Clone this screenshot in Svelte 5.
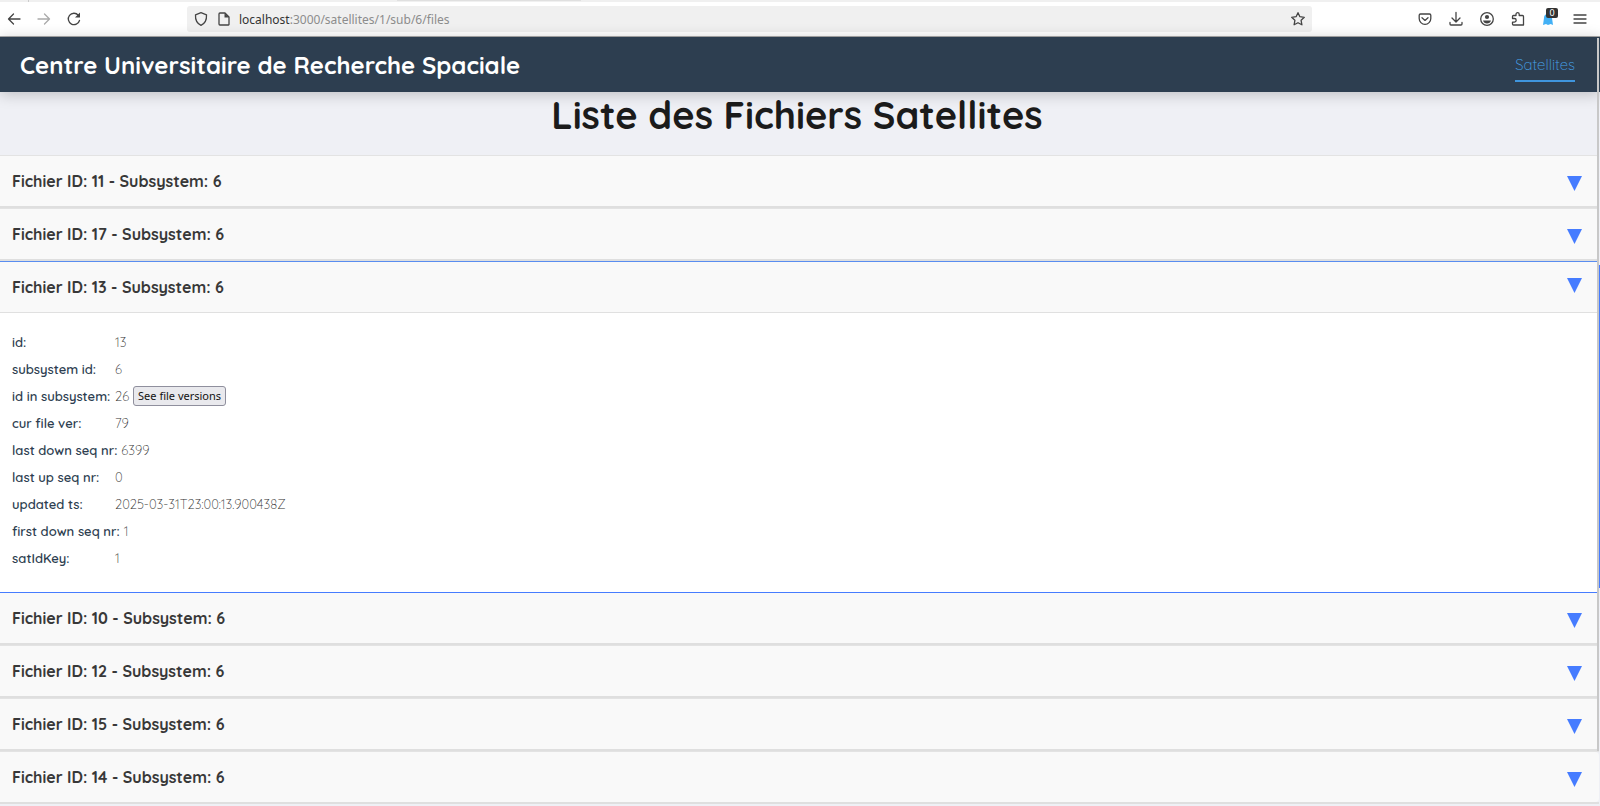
<script>
  let openId = $state(13);
  const files = [11, 17, 13, 10, 12, 15, 14];
  const details = [
    ['id', '13'],
    ['subsystem id', '6'],
    ['id in subsystem', '26'],
    ['cur file ver', '79'],
    ['last down seq nr', '6399'],
    ['last up seq nr', '0'],
    ['updated ts', '2025-03-31T23:00:13.900438Z'],
    ['first down seq nr', '1'],
    ['satIdKey', '1']
  ];
</script>

<div class="tabstrip"><span></span><i></i></div>
<div class="toolbar">
  <div class="nav">
    <button aria-label="Back"><svg viewBox="0 0 16 16"><path d="M14 8H2.5M7.5 3L2.5 8l5 5" /></svg></button>
    <button aria-label="Forward" class="dim"><svg viewBox="0 0 16 16"><path d="M2 8h11.500M8.500 3l5 5-5 5" /></svg></button>
    <button aria-label="Reload"><svg viewBox="0 0 16 16"><path d="M13.500 9.500A5.700 5.700 0 1 1 12.300 4.200" /><path class="fill" d="M14 1.500v5H9z" /></svg></button>
  </div>
  <div class="address">
    <svg viewBox="0 0 16 16"><path d="M8 1.700L13.500 3.800C13.800 8.500 12 12.500 8 14.400C4 12.500 2.200 8.500 2.500 3.800Z" /></svg>
    <svg viewBox="0 0 16 16"><path d="M4 2h5l4 4v7.500a.5.500 0 0 1-.5.500h-8.500a1 1 0 0 1-1-1V3a1 1 0 0 1 1-1z" /><path class="fill" d="M8.500 2v4.500H13z" /></svg>
    <span class="url"><b>localhost</b>:3000/satellites/1/sub/6/files</span>
    <button aria-label="Bookmark"><svg viewBox="0 0 16 16"><path d="M8 1.700l1.900 4 4.400.6-3.200 3 .8 4.500L8 11.700l-3.900 2.100.8-4.500-3.200-3 4.400-.6z" /></svg></button>
  </div>
  <div class="tools">
    <button aria-label="Pocket"><svg viewBox="0 0 16 16"><path d="M3.500 3h9A1.300 1.300 0 0 1 13.800 4.300V7.500a5.800 5.800 0 0 1-11.600 0V4.300A1.300 1.300 0 0 1 3.500 3zM5 6.700l3 2.700 3-2.700" /></svg></button>
    <button aria-label="Downloads"><svg viewBox="0 0 16 16"><path d="M8 1.500v9M4 7l4 4 4-4M2 11.500v1.500a1 1 0 0 0 1 1h10a1 1 0 0 0 1-1v-1.500" /></svg></button>
    <button aria-label="Account"><svg viewBox="0 0 16 16"><circle cx="8" cy="8" r="6.300" /><circle class="fill" cx="8" cy="6" r="2.100" /><path class="fill" d="M4 9.500h8c-.5 2-2 3-4 3s-3.500-1-4-3z" /></svg></button>
    <button aria-label="Extensions"><svg viewBox="0 0 16 16"><path d="M2.500 7.500V5.500a1 1 0 0 1 1-1H6V3.300a1.600 1.600 0 0 1 3.200 0V4.500h3.300a1 1 0 0 1 1 1V14h-10a1 1 0 0 1-1-1v-1.900h1.900a1.800 1.800 0 0 0 0-3.600z" /></svg></button>
    <button aria-label="Blocker" class="ghost"><svg viewBox="0 0 16 16"><path d="M2 14L3 7a4 4 0 0 1 8 0l1 7-2.300-1L7 14l-2-1z" /></svg><em>0</em></button>
    <button aria-label="Menu"><svg viewBox="0 0 16 16"><path d="M2 4h12M2 8h12M2 12h12" /></svg></button>
  </div>
</div>

<header>
  <div class="brand">Centre Universitaire de Recherche Spaciale</div>
  <a href="#satellites">Satellites</a>
</header>

<main>
  <h1>Liste des Fichiers Satellites</h1>
  {#each files as id}
    <section class:open={openId === id}>
      <button class="head" aria-expanded={openId === id} onclick={() => (openId = openId === id ? 0 : id)}>
        <span>Fichier ID: {id} - Subsystem: 6</span>
        <svg viewBox="0 0 16 16"><path d="M0 0h16L8 16z" /></svg>
      </button>
      {#if openId === id}
        <dl>
          {#each details as [name, value]}
            <div>
              <dt>{name}:</dt>
              <dd>{value}{#if name === 'id in subsystem'}<button>See file versions</button>{/if}</dd>
            </div>
          {/each}
        </dl>
      {/if}
    </section>
  {/each}
</main>
<div class="scroll"></div>
<div class="inner"></div>

<style>
  :global(body) { margin: 0; background: #eff0f5; font-family: Quicksand, Lato, sans-serif; overflow: hidden; }
  button { font: inherit; border: 0; background: none; padding: 0; cursor: pointer; }
  .tabstrip { height: 2px; background: #f0f0f0; display: flex; }
  .tabstrip span { width: 28px; border-right: 1px solid #ccc; }
  .tabstrip i { width: 184px; margin-left: 368px; background: #e0e0e0; height: 1px; }
  .toolbar { height: 34px; background: #fff; border-bottom: 1px solid #aaa; display: flex; align-items: center; font-family: "Noto Sans", sans-serif; }
  .toolbar svg { width: 16px; height: 16px; fill: none; stroke: #444; stroke-width: 1.3; stroke-linecap: round; stroke-linejoin: round; display: block; }
  .toolbar .fill { fill: #444; stroke: none; }
  .nav { display: flex; gap: 14px; padding-left: 6px; width: 187px; box-sizing: border-box; }
  .nav .dim svg { stroke: #aaa; }
  .address { flex: 1; margin-right: 105px; height: 26px; display: flex; align-items: center; gap: 7px; padding: 0 6px; background: #f0f0f0; border-radius: 3px; }
  .url { flex: 1; font-size: 12px; color: #8c8c8c; }
  .url b { font-weight: 400; color: #333; }
  .tools { display: flex; gap: 15px; padding-right: 12px; }
  .ghost { position: relative; }
  .toolbar .ghost svg { fill: #42b0f5; stroke: none; }
  .ghost em { position: absolute; right: -1px; top: -3px; width: 12px; height: 10px; border-radius: 2px; background: #333; color: #fff; font: 9px/10px "Noto Sans", sans-serif; }
  header { position: relative; z-index: 1; height: 55px; padding: 0 25px 0 20px; background: #2d3e50; display: flex; align-items: center; justify-content: space-between; box-shadow: 0 2px 14px rgba(0, 0, 0, .22); }
  .brand { color: #fff; font-size: 24px; font-weight: 700; }
  header a { color: #46a2ea; text-decoration: none; font-size: 15px; font-weight: 300; line-height: 24px; padding-top: 5px; padding-bottom: 3px; border-bottom: 2px solid #3f95dd; }
  main { margin-right: 1px; }
  h1 { margin: 0; padding-right: 5px; height: 63px; font-size: 38px; line-height: 46px; font-weight: 700; text-align: center; color: #1b1b1b; }
  section { border-top: 1px solid #e3e3e3; border-bottom: 2px solid #dfdfdf; }
  .head { width: 100%; height: 50px; padding: 0 17px 0 12px; background: #f9f9f9; border-radius: 0 4px 4px 0; display: flex; justify-content: space-between; align-items: center; font-size: 16px; font-weight: 700; color: #383838; }
  .head svg { width: 15px; height: 15px; fill: #467cff; margin-top: 4px; }
  .open { background: #fff; border-top-color: #5a8df0; border-bottom: 1px solid #467cff; }
  .open .head { height: 51px; border-bottom: 1px solid #e0e0e0; border-radius: 0; }
  .open .head svg { margin: 0 0 4px; }
  .open + section { border-top: 0; }
  dl { margin: 0; padding: 16px 12px 20px; }
  dl div { display: flex; align-items: center; height: 27px; gap: 4px; font-size: 13px; }
  dt { min-width: 99px; font-weight: 600; color: #2d3e50; }
  dd { margin: 0; display: flex; align-items: center; gap: 4px; color: #333; font-weight: 300; }
  dt, dd { padding-bottom: 2px; }
  dd button { font: 11px/18px "Noto Sans", sans-serif; padding: 0 4px; color: #111; background: #e9e9ed; border: 1px solid #8f8f9d; border-radius: 3px; }
  .scroll { position: fixed; z-index: 2; right: 1px; top: 38px; width: 2px; height: 713px; background: #c8c8c8; }
  .inner { position: fixed; z-index: 2; right: 0; top: 265px; width: 1px; height: 323px; background: #467cff; }
</style>
